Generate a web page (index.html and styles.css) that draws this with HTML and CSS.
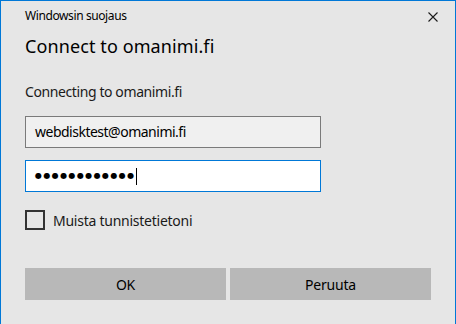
FILE: index.html
```html
<!DOCTYPE html>
<html lang="fi">
  <head>
    <meta charset="UTF-8" />
    <title>Windowsin suojaus</title>
    <link rel="stylesheet" href="styles.css">
  </head>
  <body>
    <div class="dialog">
      <div class="title-bar">
        <span class="title">Windowsin suojaus</span>
        <svg class="close" width="10" height="10" viewBox="0 0 10 10">
          <path d="M0.5 0.5 L9.5 9.5 M9.5 0.5 L0.5 9.5" stroke="#1a1a1a" stroke-width="1.1" />
        </svg>
      </div>

      <h1 class="heading">Connect to omanimi.fi</h1>
      <p class="info">Connecting to omanimi.fi</p>

      <div class="field field-user">webdisktest@omanimi.fi</div>
      <div class="field field-pass">
        <span class="dots">●●●●●●●●●●●●</span><span class="caret"></span>
      </div>

      <label class="remember">
        <span class="check"></span>
        Muista tunnistetietoni
      </label>

      <div class="buttons">
        <button class="btn">OK</button>
        <button class="btn">Peruuta</button>
      </div>
    </div>
  </body>
</html>
```

FILE: styles.css
```css
* {
  box-sizing: border-box;
  margin: 0;
  padding: 0;
}

body {
  background: #e6e6e6;
  font-family: "Noto Sans", "Open Sans", sans-serif;
  color: #1a1a1a;
}

.dialog {
  width: 456px;
  height: 324px;
  border: 1px solid #0078d7;
  border-bottom: none;
  padding: 0 24px 0 24px;
}

.title-bar {
  display: flex;
  justify-content: space-between;
  align-items: flex-start;
  height: 30px;
  padding-top: 6px;
}

.title {
  font-size: 12px;
  letter-spacing: -0.4px;
  color: #000;
}

.close {
  margin-top: 5px;
  margin-right: -7px;
}

.heading {
  font-size: 18px;
  font-weight: 400;
  color: #000;
  line-height: 28px;
  margin-top: 1px;
  letter-spacing: 0.1px;
}

.info {
  font-size: 14px;
  letter-spacing: -0.4px;
  line-height: 20px;
  margin-top: 22px;
}

.field {
  width: 296px;
  height: 32px;
  border: 1px solid #7a7a7a;
  background: #f0f0f0;
  font-size: 14px;
  letter-spacing: -0.5px;
  line-height: 30px;
  padding: 0 9px;
  margin-top: 14px;
  color: #000;
}

.field-pass {
  background: #fff;
  border-color: #0078d7;
  margin-top: 12px;
  display: flex;
  align-items: center;
}

.dots {
  font-family: "DejaVu Sans", sans-serif;
  font-size: 8px;
  letter-spacing: 1.4px;
  color: #000;
}

.caret {
  width: 1px;
  height: 17px;
  background: #000;
}

.remember {
  display: flex;
  align-items: center;
  gap: 8px;
  font-size: 14px;
  letter-spacing: -0.25px;
  margin-top: 18px;
}

.check {
  width: 20px;
  height: 20px;
  border: 2px solid #333;
}

.buttons {
  display: flex;
  gap: 4px;
  margin-top: 38px;
  width: 406px;
}

.btn {
  flex: 1;
  height: 32px;
  border: none;
  background: #b8b8b8;
  font-family: "Noto Sans", "Open Sans", sans-serif;
  font-size: 14px;
  letter-spacing: -0.2px;
  color: #000;
}
```
